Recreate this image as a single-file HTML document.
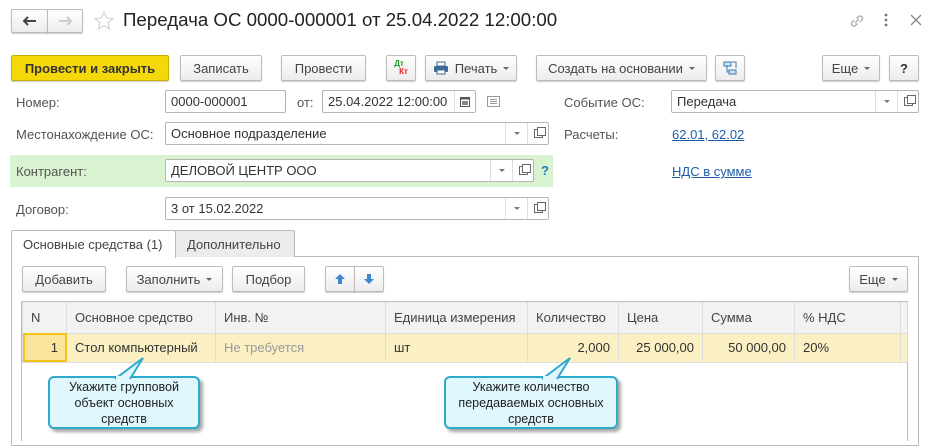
<!DOCTYPE html>
<html><head><meta charset="utf-8"><style>
*{box-sizing:border-box;margin:0;padding:0}
body{width:926px;height:437px;background:#fff;font-family:"Liberation Sans",Arial,sans-serif;font-size:13px;color:#333;position:relative;overflow:hidden}
.a{position:absolute}
.btn{position:absolute;border:1px solid #bcbcbc;border-radius:2px;background:linear-gradient(#fff,#ececec);box-shadow:0 1px 1px rgba(0,0,0,.2);display:flex;align-items:center;justify-content:center;color:#444;font-size:13px;white-space:nowrap}
.dd:after{content:"";border:3px solid transparent;border-top:3px solid #666;margin:4px 0 0 6px}
.inp{position:absolute;border:1px solid #b6b6b6;border-radius:2px;background:#fff;height:23px;padding:0 5px;line-height:21px;font-size:13px;color:#333;white-space:nowrap}
.sep{position:absolute;top:0;bottom:0;width:22px;border-left:1px solid #ddd;display:flex;align-items:center;justify-content:center}
.tri{border:3px solid transparent;border-top:3px solid #777;margin-top:3px}
.lbl{position:absolute;color:#555;font-size:13px}
.lnk{position:absolute;color:#1c5ea8;text-decoration:underline;font-size:13px}
.open{width:9px;height:9px;border:1px solid #666;position:relative}
.open:before{content:"";position:absolute;left:2px;top:-3px;width:7px;height:7px;border:1px solid #666;background:#fff}
table{border-collapse:collapse;position:absolute;left:22px;top:302px;width:885px;font-size:13px;table-layout:fixed}
td{border:1px solid #ddd;padding:0 8px;height:29px;white-space:nowrap;overflow:hidden}
th{border:1px solid #ddd;border-top:0;padding:0 8px;height:31px;background:#f2f2f2;text-align:left;font-weight:normal;color:#444;white-space:nowrap;overflow:hidden}
.call{position:absolute;background:#dff7fd;border:2px solid #2ea9cc;border-radius:6px;box-shadow:3px 3px 3px rgba(0,0,0,.35);text-align:center;font-size:12.5px;line-height:16px;color:#222}
</style></head><body>
<div class="btn" style="left:11px;top:9px;width:37px;height:24px;border-radius:2px 0 0 2px"><svg width="14" height="10"><path d="M1 5h12M5 1L1 5l4 4" stroke="#444" stroke-width="2" fill="none"/></svg></div>
<div class="btn" style="left:47px;top:9px;width:36px;height:24px;border-radius:0 2px 2px 0"><svg width="14" height="10"><path d="M1 5h12M9 1l4 4-4 4" stroke="#ccc" stroke-width="2" fill="none"/></svg></div>
<svg class="a" style="left:94px;top:11px" width="20" height="19"><path d="M10 1l2.6 6 6.4.5-4.9 4.2 1.5 6.3L10 14.6 4.4 18l1.5-6.3L1 7.5l6.4-.5z" fill="none" stroke="#ccc"/></svg>
<div class="a" style="left:123px;top:9px;font-size:18.7px;color:#222">Передача ОС 0000-000001 от 25.04.2022 12:00:00</div>
<svg class="a" style="left:848px;top:12px" width="18" height="18"><path d="M7 11l4-4M6 8l-2 2a2.5 2.5 0 003.5 3.5l2-2M12 10l2-2a2.5 2.5 0 00-3.5-3.5l-2 2" stroke="#aaa" fill="none" stroke-width="1.3"/></svg>
<svg class="a" style="left:884px;top:13px" width="4" height="14"><circle cx="2" cy="2" r="1.4" fill="#777"/><circle cx="2" cy="7" r="1.4" fill="#777"/><circle cx="2" cy="12" r="1.4" fill="#777"/></svg>
<svg class="a" style="left:910px;top:14px" width="12" height="12"><path d="M1 1l10 10M11 1L1 11" stroke="#888" stroke-width="1.3"/></svg>
<div class="btn" style="left:11px;top:55px;width:158px;height:26px;background:#f5d80a;border-color:#c9b000;color:#333;font-weight:bold">Провести и закрыть</div>
<div class="btn" style="left:180px;top:55px;width:82px;height:26px">Записать</div>
<div class="btn" style="left:281px;top:55px;width:85px;height:26px">Провести</div>
<div class="btn" style="left:386px;top:55px;width:30px;height:26px;flex-direction:column;line-height:8px;font-size:8px;font-weight:bold"><span style="color:#2a9a2a;margin-left:-4px">Дт</span><span style="color:#d22;margin-left:5px">Кт</span></div>
<div class="btn dd" style="left:425px;top:55px;width:92px;height:26px"><svg width="16" height="14" style="margin-right:6px"><rect x="4" y="1" width="8" height="4" fill="#fff" stroke="#3b6a9a"/><rect x="1" y="5" width="14" height="6" rx="1" fill="#3b6a9a"/><rect x="4" y="9" width="8" height="4" fill="#fff" stroke="#3b6a9a"/></svg>Печать</div>
<div class="btn dd" style="left:536px;top:55px;width:171px;height:26px">Создать на основании</div>
<div class="btn" style="left:715px;top:55px;width:30px;height:26px"><svg width="16" height="16"><rect x="2" y="2" width="7" height="4" fill="#cfe3f3" stroke="#3b78b0"/><rect x="7" y="10" width="7" height="4" fill="#cfe3f3" stroke="#3b78b0"/><path d="M5 6v6h2M10 2h4v6" stroke="#3b78b0" fill="none"/></svg></div>
<div class="btn dd" style="left:822px;top:55px;width:58px;height:26px">Еще</div>
<div class="btn" style="left:889px;top:55px;width:30px;height:26px;font-weight:bold;color:#333">?</div>
<div class="lbl" style="left:16px;top:95px">Номер:</div>
<div class="inp" style="left:165px;top:90px;width:121px">0000-000001</div>
<div class="lbl" style="left:297px;top:95px">от:</div>
<div class="inp" style="left:322px;top:90px;width:154px">25.04.2022 12:00:00<div class="sep" style="right:0;width:21px"><svg width="10" height="11"><rect x="0.5" y="1.5" width="9" height="9" fill="none" stroke="#555"/><rect x="0.5" y="1.5" width="9" height="2" fill="#555"/><rect x="2" y="5" width="6" height="4" fill="#888"/></svg></div></div>
<svg class="a" style="left:487px;top:96px" width="13" height="11"><rect x=".5" y=".5" width="12" height="10" fill="none" stroke="#999"/><path d="M3 3.5h7M3 5.5h7M3 7.5h7" stroke="#999"/></svg>
<div class="lbl" style="left:564px;top:95px">Событие ОС:</div>
<div class="inp" style="left:671px;top:90px;width:248px">Передача<div class="sep" style="right:21px"><div class="tri"></div></div><div class="sep" style="right:0;width:21px"><div class="open"></div></div></div>
<div class="lbl" style="left:16px;top:127px">Местонахождение ОС:</div>
<div class="inp" style="left:165px;top:122px;width:384px">Основное подразделение<div class="sep" style="right:21px"><div class="tri"></div></div><div class="sep" style="right:0;width:21px"><div class="open"></div></div></div>
<div class="lbl" style="left:564px;top:127px">Расчеты:</div>
<div class="lnk" style="left:672px;top:127px">62.01, 62.02</div>
<div class="a" style="left:10px;top:155px;width:543px;height:32px;background:#d9f2cf"></div>
<div class="lbl" style="left:16px;top:164px">Контрагент:</div>
<div class="inp" style="left:165px;top:159px;width:369px">ДЕЛОВОЙ ЦЕНТР ООО<div class="sep" style="right:21px"><div class="tri"></div></div><div class="sep" style="right:0;width:21px"><div class="open"></div></div></div>
<div class="a" style="left:541px;top:163px;color:#1c7fbf;font-weight:bold;font-size:13px">?</div>
<div class="lnk" style="left:672px;top:164px">НДС в сумме</div>
<div class="lbl" style="left:16px;top:202px">Договор:</div>
<div class="inp" style="left:165px;top:197px;width:384px">3 от 15.02.2022<div class="sep" style="right:21px"><div class="tri"></div></div><div class="sep" style="right:0;width:21px"><div class="open"></div></div></div>
<div class="a" style="left:11px;top:256px;width:908px;height:190px;border:1px solid #bbb"></div>
<div class="a" style="left:175px;top:230px;width:120px;height:27px;background:#ececec;border:1px solid #bbb;border-bottom:0;border-radius:2px 2px 0 0;padding:6px 0 0 11px;color:#444">Дополнительно</div>
<div class="a" style="left:11px;top:230px;width:165px;height:28px;background:#fff;border:1px solid #bbb;border-bottom:0;border-radius:2px 2px 0 0;padding:6px 0 0 11px;color:#444">Основные средства (1)</div>
<div class="btn" style="left:22px;top:266px;width:84px;height:26px">Добавить</div>
<div class="btn dd" style="left:126px;top:266px;width:97px;height:26px">Заполнить</div>
<div class="btn" style="left:232px;top:266px;width:73px;height:26px">Подбор</div>
<div class="btn" style="left:325px;top:266px;width:30px;height:26px;border-radius:2px 0 0 2px"><svg width="12" height="12"><path d="M6 1l5 5H8v5H4V6H1z" fill="#3d86d1"/></svg></div>
<div class="btn" style="left:354px;top:266px;width:30px;height:26px;border-radius:0 2px 2px 0"><svg width="12" height="12"><path d="M6 11l5-5H8V1H4v5H1z" fill="#3d86d1"/></svg></div>
<div class="btn dd" style="left:849px;top:266px;width:59px;height:26px">Еще</div>
<div class="a" style="left:21px;top:301px;width:887px;height:140px;border:1px solid #bbb;border-bottom:0"></div>
<table>
<colgroup><col style="width:44px"><col style="width:149px"><col style="width:170px"><col style="width:142px"><col style="width:91px"><col style="width:84px"><col style="width:92px"><col style="width:106px"><col style="width:7px"></colgroup>
<tr><th>N</th><th>Основное средство</th><th>Инв. №</th><th>Единица измерения</th><th>Количество</th><th>Цена</th><th>Сумма</th><th>% НДС</th><th style="padding:0"></th></tr>
<tr style="background:#fbf0c4"><td style="text-align:right;background:#fbe59a;outline:2px solid #f0c419;outline-offset:-2px">1</td><td>Стол компьютерный</td><td style="color:#999">Не требуется</td><td>шт</td><td style="text-align:right">2,000</td><td style="text-align:right">25 000,00</td><td style="text-align:right">50 000,00</td><td>20%</td><td style="padding:0"></td></tr>
</table>
<div class="call" style="left:48px;top:376px;width:152px;height:53px;padding-top:1px">Укажите групповой<br>объект основных<br>средств</div>
<svg class="a" style="left:110px;top:356px" width="40" height="24"><path d="M5 23L33 2 20 23" fill="#dff7fd" stroke="#2ea9cc" stroke-width="2"/><rect x="6" y="20" width="13" height="4" fill="#dff7fd"/></svg>
<div class="call" style="left:444px;top:376px;width:174px;height:53px;padding-top:1px">Укажите количество<br>передаваемых основных<br>средств</div>
<svg class="a" style="left:537px;top:356px" width="40" height="24"><path d="M5 23L33 2 20 23" fill="#dff7fd" stroke="#2ea9cc" stroke-width="2"/><rect x="6" y="20" width="13" height="4" fill="#dff7fd"/></svg>
</body></html>
